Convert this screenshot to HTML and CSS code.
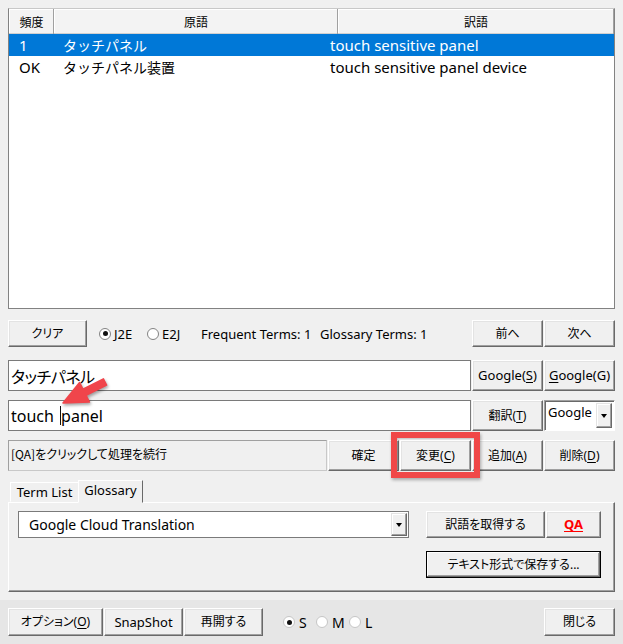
FILE: index.html
```html
<!DOCTYPE html>
<html lang="ja">
<head>
<meta charset="utf-8">
<title>Glossary</title>
<link rel="stylesheet" href="styles.css">
</head>
<body>
<div class="app">
  <div class="main">
    <div class="list">
      <div class="list-head">
        <div class="h h1">頻度</div>
        <div class="h h2">原語</div>
        <div class="h h3">訳語</div>
      </div>
      <div class="row sel">
        <span class="c1">1</span><span class="c2">タッチパネル</span><span class="c3">touch sensitive panel</span>
      </div>
      <div class="row">
        <span class="c1">OK</span><span class="c2">タッチパネル装置</span><span class="c3">touch sensitive panel device</span>
      </div>
    </div>

    <div class="toolbar">
      <button class="btn w79 jp">クリア</button>
      <label class="opt opt-lang"><span class="radio on"></span><span class="lbl">J2E</span></label>
      <label class="opt opt-lang"><span class="radio"></span><span class="lbl">E2J</span></label>
      <span class="lbl stat stat1">Frequent Terms: 1</span>
      <span class="lbl stat">Glossary Terms: 1</span>
      <div class="push"></div>
      <button class="btn w71 jp">前へ</button>
      <button class="btn w71 jp">次へ</button>
    </div>

    <div class="line line-src">
      <div class="field src">タッチパネル</div>
      <button class="btn w71 lat">Google(<u>S</u>)</button>
      <button class="btn w71 lat"><u>G</u>oogle(G)</button>
    </div>

    <div class="line line-tgt">
      <div class="field tgt">touch <span class="caret"></span>panel</div>
      <button class="btn w71 jp">翻訳(<u>T</u>)</button>
      <div class="select">
        <span class="select-text">Google</span>
        <span class="drop"><span class="tri"></span></span>
      </div>
    </div>

    <div class="line line-status">
      <div class="status">[QA]をクリックして処理を続行</div>
      <button class="btn w71 jp">確定</button>
      <button class="btn w71 jp">変更(<u>C</u>)</button>
      <button class="btn w71 jp">追加(<u>A</u>)</button>
      <button class="btn w71 jp">削除(<u>D</u>)</button>
    </div>

    <div class="tabs">
      <div class="tab">Term List</div>
      <div class="tab active">Glossary</div>
    </div>
    <div class="panel">
      <div class="panel-row">
        <div class="combo">
          <span class="combo-text">Google Cloud Translation</span>
          <span class="drop"><span class="tri"></span></span>
        </div>
        <button class="btn w119 jp">訳語を取得する</button>
        <button class="btn w55 qa"><u>QA</u></button>
      </div>
      <div class="panel-row2">
        <button class="btn w175 jp default">テキスト形式で保存する...</button>
      </div>
    </div>
  </div>

  <div class="footer">
    <button class="btn w95 jp">オプション(<u>O</u>)</button>
    <button class="btn w79 lat">SnapShot</button>
    <button class="btn w79 jp">再開する</button>
    <label class="opt opt-size first"><span class="radio on faint"></span><span class="lbl big">S</span></label>
    <label class="opt opt-size"><span class="radio faint"></span><span class="lbl big">M</span></label>
    <label class="opt opt-size"><span class="radio faint"></span><span class="lbl big">L</span></label>
    <div class="push"></div>
    <button class="btn w71 jp">閉じる</button>
  </div>

  <svg class="arrow" width="60" height="40" viewBox="0 0 60 40">
    <polygon points="8,33 24.6,12.5 27.9,19.2 48.4,8.9 51.6,15.1 31.1,25.4 34.4,32.1" fill="#f0454b" stroke="#f0454b" stroke-width="1.5" stroke-linejoin="round"/>
  </svg>
  <div class="highlight"></div>
</div>
</body>
</html>
```

FILE: styles.css
```css
* { box-sizing: border-box; }
body { margin: 0; }

.app {
  width: 623px;
  height: 644px;
  background: #f0f0f0;
  position: relative;
  overflow: hidden;
  font-family: "Noto Sans", "Noto Sans CJK JP", sans-serif;
  color: #000;
}

.main { padding: 8px 8px 0; }

/* list view */
.list {
  height: 301px;
  border: 1px solid #828282;
  border-top-color: #c8c8c8;
  background: #fff;
}
.list-head { display: flex; height: 25px; background: #f3f3f3; }
.h {
  font-family: "Noto Sans CJK JP", sans-serif;
  font-size: 12px;
  display: flex;
  align-items: center;
  justify-content: center;
  box-shadow: inset -1px 0 0 #a0a0a0, inset 0 -1px 0 #d0d0d0, inset 1px 1px 0 #fff;
}
.h1 { width: 45px; }
.h2 { width: 284px; }
.h3 { flex: 1; }

.row {
  display: flex;
  align-items: center;
  height: 22px;
  font-size: 15px;
  white-space: nowrap;
}
.row.sel { background: #0078d7; color: #fff; }
.c1 { width: 45px; padding-left: 10px; }
.c2 { width: 276px; padding-left: 9px; font-size: 14px; font-family: "Noto Sans CJK JP", sans-serif; }
.c3 { flex: 1; }

/* buttons */
.btn {
  height: 100%;
  margin: 0;
  padding: 0;
  background: #f0f0f0;
  border: 1px solid;
  border-color: #fff #696969 #696969 #fff;
  box-shadow: inset -1px -1px 0 #a0a0a0, inset 1px 1px 0 #e3e3e3;
  font-family: "Noto Sans", "Noto Sans CJK JP", sans-serif;
  color: #000;
  display: flex;
  align-items: center;
  justify-content: center;
  white-space: nowrap;
  line-height: 1;
  flex: none;
}
.btn.jp { font-size: 12px; font-feature-settings: "palt"; }
.btn.lat { font-size: 13px; }
.btn u { text-underline-offset: 2px; }
.btn.qa { color: #ff0000; font-weight: bold; font-size: 13px; }
.btn.default {
  border-color: #000;
  box-shadow: inset -1px -1px 0 #696969, inset 1px 1px 0 #fff, inset -2px -2px 0 #a0a0a0;
}
.w55 { width: 55px; }
.w71 { width: 71px; }
.w79 { width: 79px; }
.w95 { width: 95px; }
.w119 { width: 119px; }
.w175 { width: 175px; }

.push { flex: 1; }

/* toolbar */
.toolbar {
  display: flex;
  align-items: center;
  height: 27px;
  margin-top: 11px;
  gap: 1px;
}
.opt { display: flex; align-items: center; flex: none; }
.opt-lang { width: 47px; gap: 3px; }
.toolbar .opt-lang:nth-of-type(1) { margin-left: 11px; }
.radio {
  width: 12px;
  height: 12px;
  border-radius: 50%;
  border: 1px solid #838383;
  background: #fff;
  display: inline-flex;
  align-items: center;
  justify-content: center;
  flex: none;
}
.radio.on::after {
  content: "";
  width: 5px;
  height: 5px;
  border-radius: 50%;
  background: #111;
}
.radio.faint { border-color: #c6c6c6; }
.lbl { font-size: 13px; white-space: nowrap; }
.lbl.big { font-size: 14px; }
.stat1 { margin-left: 6px; width: 118px; }

/* input lines */
.line { display: flex; gap: 1px; height: 31px; }
.line-src { margin-top: 13px; }
.line-tgt { margin-top: 9px; }
.line-status { margin-top: 9px; }

.field {
  flex: 1;
  background: #fff;
  border: 1px solid #7a7a7a;
  display: flex;
  align-items: center;
  padding-left: 2px;
  white-space: pre;
}
.field.src {
  font-family: "Noto Sans CJK JP", sans-serif;
  font-size: 16px;
  font-feature-settings: "palt";
  letter-spacing: -0.5px;
}
.field.tgt { font-size: 16px; }
.caret {
  display: inline-block;
  width: 1px;
  height: 19px;
  background: #111;
  margin-left: 2px;
  margin-right: 0;
}

.select {
  width: 71px;
  flex: none;
  background: #fff;
  border: 1px solid;
  border-color: #a0a0a0 #fff #fff #a0a0a0;
  box-shadow: inset 1px 1px 0 #696969;
  display: flex;
  padding: 2px 2px 2px 3px;
}
.select-text { flex: 1; font-size: 13px; line-height: 18px; }
.drop {
  width: 16px;
  flex: none;
  background: #f0f0f0;
  border: 1px solid;
  border-color: #e3e3e3 #696969 #696969 #e3e3e3;
  box-shadow: inset -1px -1px 0 #a0a0a0, inset 1px 1px 0 #fff;
  display: flex;
  align-items: center;
  justify-content: center;
}
.tri {
  width: 0;
  height: 0;
  border-left: 3.5px solid transparent;
  border-right: 3.5px solid transparent;
  border-top: 4px solid #000;
}

.status {
  flex: 1;
  border: 1px solid #a0a0a0;
  border-bottom-color: #c8c8c8;
  border-right-color: #c8c8c8;
  font-family: "Noto Sans CJK JP", sans-serif;
  font-size: 12px;
  font-feature-settings: "palt";
  padding: 4px 0 0 2px;
  white-space: nowrap;
}

/* tabs */
.tabs {
  display: flex;
  align-items: flex-end;
  height: 22px;
  margin-top: 9px;
  padding-left: 2px;
  position: relative;
  z-index: 1;
}
.tab {
  height: 20px;
  font-size: 13px;
  padding: 0 6px;
  display: flex;
  align-items: center;
  border: 1px solid;
  border-color: #fff #a0a0a0 transparent #fff;
  white-space: nowrap;
}
.tab:first-child { width: 69px; justify-content: center; }
.tab.active {
  height: 23px;
  width: 65px;
  margin-bottom: -1px;
  margin-left: -1px;
  background: #f0f0f0;
  border-color: #fff #696969 transparent #fff;
  padding-bottom: 3px;
  justify-content: center;
}
.panel {
  height: 90px;
  border: 1px solid;
  border-color: #fff #696969 #696969 #fff;
  box-shadow: inset -1px -1px 0 #a0a0a0;
  padding: 8px 0 0 9px;
}
.panel-row { display: flex; height: 27px; gap: 1px; }
.combo {
  width: 391px;
  flex: none;
  margin-right: 16px;
  background: #fff;
  border: 1px solid #7a7a7a;
  display: flex;
  padding: 1px;
}
.combo-text { flex: 1; font-size: 14px; line-height: 23px; padding-left: 9px; }
.panel-row2 { display: flex; height: 27px; margin-top: 13px; padding-left: 408px; }

/* footer */
.footer {
  margin-top: 8px;
  height: 44px;
  background: #e6e6e6;
  padding: 8px 8px 8px;
  display: flex;
  align-items: center;
  gap: 1px;
}
.footer .btn { height: 28px; }
.opt-size { width: 32px; gap: 4px; }
.opt-size.first { margin-left: 19px; }

/* overlays */
.arrow {
  position: absolute;
  left: 55px;
  top: 370px;
  filter: drop-shadow(1px 2px 1.5px rgba(0,0,0,0.35));
}
.highlight {
  position: absolute;
  left: 391px;
  top: 432px;
  width: 89px;
  height: 46px;
  border: 6px solid #f04848;
  box-shadow: 1px 2px 3px rgba(0,0,0,0.3), inset 1px 1px 2px rgba(0,0,0,0.2);
}
```
